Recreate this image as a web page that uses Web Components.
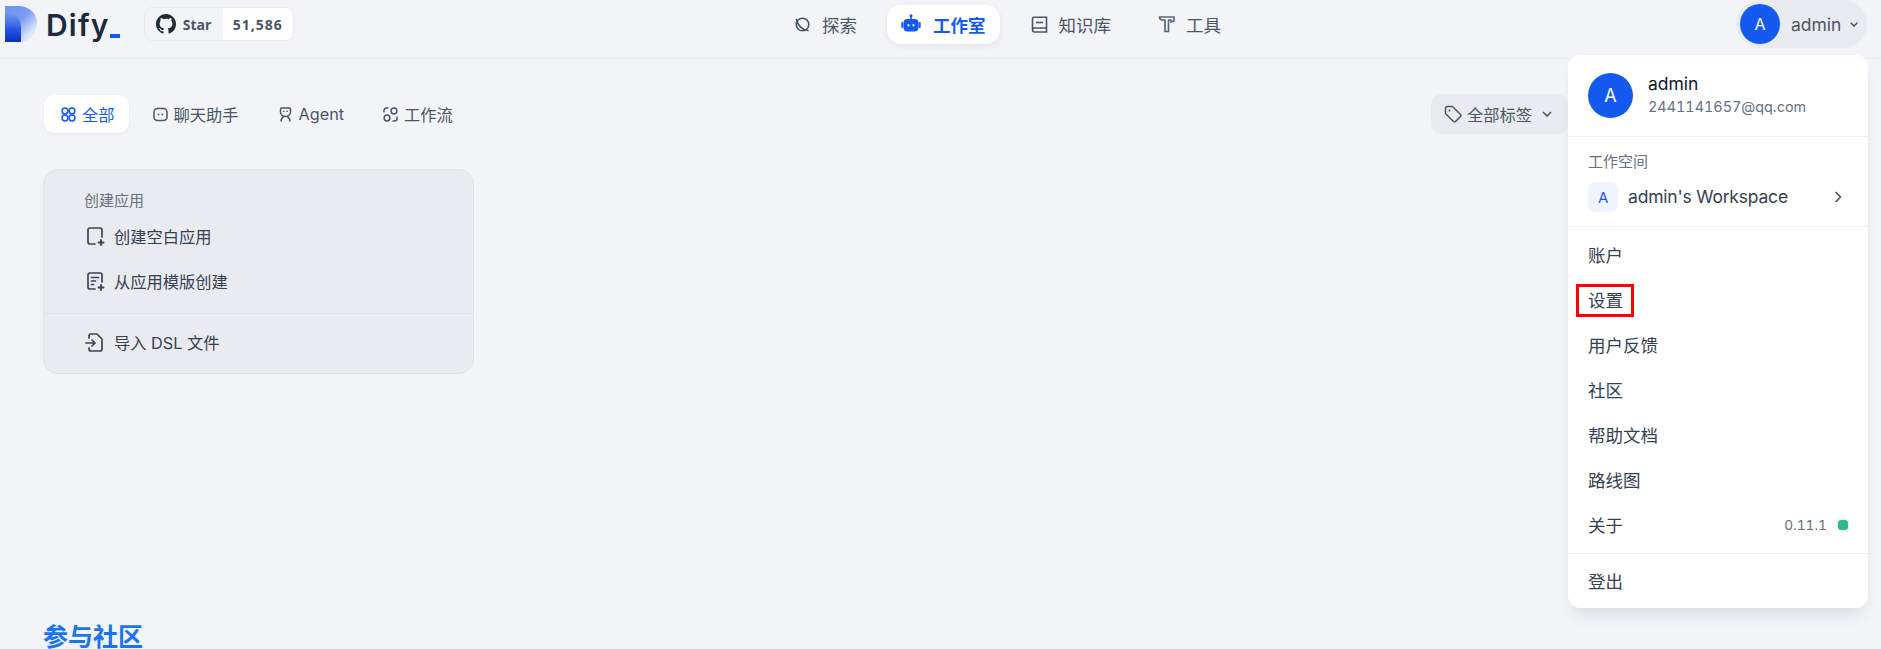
<!DOCTYPE html>
<html lang="zh"><head><meta charset="utf-8"><title>Dify</title>
<style>
html,body{margin:0;height:649px;overflow:hidden;background:#f3f4f8;font-family:Inter,"Noto Sans CJK SC",sans-serif;color:#354052}
</style></head><body>
<dify-app>
<dify-header>
  <dify-logo slot="left"></dify-logo>
  <github-badge slot="left"></github-badge>
  <nav-item slot="nav"><svg slot="icon" width="17" height="17" viewBox="0 0 17 17" fill="none" stroke="#4a5568" stroke-width="1.600" stroke-linecap="round"><circle cx="8.500" cy="8.500" r="6.300"/><path d="M2.500 3.500C3.500 9 8 14 14 14.500"/></svg>探索</nav-item>
  <nav-item slot="nav" active><svg slot="icon" width="20" height="20" viewBox="0 0 20 20" fill="#155aef"><rect x="9.200" y="1" width="1.600" height="4"/><circle cx="10" cy="1.800" r="1.500"/><rect x="2.500" y="5" width="15" height="12.500" rx="4"/><rect x="0.300" y="8" width="2" height="6" rx="1"/><rect x="17.700" y="8" width="2" height="6" rx="1"/><rect x="6.500" y="10" width="2" height="2.600" rx="1" fill="#fff"/><rect x="11.500" y="10" width="2" height="2.600" rx="1" fill="#fff"/></svg>工作室</nav-item>
  <nav-item slot="nav"><svg slot="icon" width="17" height="17" viewBox="0 0 17 17" fill="none" stroke="#4a5568" stroke-width="1.600"><path d="M1.500 13.500V2.500C1.500 1.700 2 1.200 2.800 1.200H15.500V16H3.500A2 2 0 0 1 1.500 14 2 2 0 0 1 3.500 12H15.500"/><path d="M5 6.500h7"/></svg>知识库</nav-item>
  <nav-item slot="nav"><svg slot="icon" width="17" height="18" viewBox="0 0 17 18" fill="none" stroke="#5b6679" stroke-width="1.700" stroke-linejoin="round"><path d="M1.500 2H16V6L13 7V5H10.500V16.500H7V5H4.500C3 5 1.500 4 1.500 2Z"/></svg>工具</nav-item>
  <user-chip slot="right"></user-chip>
</dify-header>
<filter-bar>
  <filter-tab active><svg slot="icon" width="15" height="15" viewBox="0 0 15 15" fill="none" stroke="#155aef" stroke-width="1.500"><circle cx="4" cy="4" r="2.900"/><circle cx="11" cy="4" r="2.900"/><circle cx="4" cy="11" r="2.900"/><circle cx="11" cy="11" r="2.900"/></svg>全部</filter-tab>
  <filter-tab><svg slot="icon" width="15" height="15" viewBox="0 0 15 15" fill="none" stroke="#4b5567" stroke-width="1.500"><rect x="1" y="1.500" width="13" height="12" rx="3.500"/><circle cx="5.500" cy="7.500" r=".9" fill="#4b5567" stroke="none"/><circle cx="9.500" cy="7.500" r=".9" fill="#4b5567" stroke="none"/></svg>聊天助手</filter-tab>
  <filter-tab><svg slot="icon" width="15" height="15" viewBox="0 0 15 15" fill="none" stroke="#4b5567" stroke-width="1.500"><path d="M2.500 2.200C2.500 1.500 3 1 3.700 1h7.600c.7 0 1.200.5 1.200 1.200V5A5 4.500 0 0 1 2.500 5Z"/><path d="M3 14.500c0-2.500 1-4 2.800-5.200M12 14.500c0-2.500-1-4-2.800-5.200"/><path d="M5.800 3.800v1.200M9.200 3.800v1.200"/></svg>Agent</filter-tab>
  <filter-tab><svg slot="icon" width="15" height="15" viewBox="0 0 15 15" fill="none" stroke="#4b5567" stroke-width="1.500"><circle cx="11" cy="4" r="2.900"/><circle cx="4" cy="11" r="2.900"/><path d="M1 5.500V3.500a2.500 2.500 0 0 1 2.500-2.500H5.500M14 9.500v2a2.500 2.500 0 0 1-2.500 2.500H9.500"/></svg>工作流</filter-tab>
  <tag-filter slot="right"></tag-filter>
</filter-bar>
<create-card>
  <card-action><svg slot="icon" width="20" height="20" viewBox="0 0 20 20" fill="none" stroke="#3b4658" stroke-width="1.700" stroke-linecap="round"><path d="M10 18H5a2 2 0 0 1-2-2V4a2 2 0 0 1 2-2h10a2 2 0 0 1 2 2v7"/><path d="M16 14v5M13.500 16.500h5" stroke-width="1.900"/></svg>创建空白应用</card-action>
  <card-action><svg slot="icon" width="20" height="20" viewBox="0 0 20 20" fill="none" stroke="#3b4658" stroke-width="1.700" stroke-linecap="round"><path d="M10 18H5a2 2 0 0 1-2-2V4a2 2 0 0 1 2-2h10a2 2 0 0 1 2 2v7"/><path d="M6.500 6.500h7M6.500 10h4M6.500 13.500h2"/><path d="M16 14v5M13.500 16.500h5" stroke-width="1.900"/></svg>从应用模版创建</card-action>
  <card-action slot="footer"><svg slot="icon" width="20" height="20" viewBox="0 0 20 20" fill="none" stroke="#3b4658" stroke-width="1.700" stroke-linecap="round" stroke-linejoin="round"><path d="M4 6V4a2 2 0 0 1 2-2h6l5 5v10a2 2 0 0 1-2 2H6a2 2 0 0 1-2-2v-1"/><path d="M1 11h9M7 8l3 3-3 3"/></svg>导入 DSL 文件</card-action>
</create-card>
<section-title>参与社区</section-title>
<account-menu>
  <menu-item>账户</menu-item>
  <menu-item><marked-label>设置</marked-label></menu-item>
  <menu-item>用户反馈</menu-item>
  <menu-item>社区</menu-item>
  <menu-item>帮助文档</menu-item>
  <menu-item>路线图</menu-item>
  <menu-item>关于<version-tag slot="end">0.11.1</version-tag></menu-item>
  <menu-item slot="footer">登出</menu-item>
</account-menu>
</dify-app>
<script>
const def=(name,html)=>customElements.define(name,class extends HTMLElement{
  constructor(){super();this.attachShadow({mode:'open'}).innerHTML=html;}
});
def('dify-app',`<style>:host{display:block;position:relative;height:649px;overflow:hidden}</style><slot></slot>`);
def('dify-header',`<style>
:host{display:grid;grid-template-columns:766px auto 1fr;align-items:center;height:58px;border-bottom:1px solid #e9ebf0;padding:0 14px 0 5px}
.l{display:flex;align-items:center;gap:24px;height:48px;margin-top:-10px}
.n{display:flex;align-items:center;gap:2px;margin-top:-10px}
.r{display:flex;justify-content:flex-end;margin-top:-10px}
</style><div class="l"><slot name="left"></slot></div><div class="n"><slot name="nav"></slot></div><div class="r"><slot name="right"></slot></div>`);
def('dify-logo',`<style>:host{display:flex;align-items:center;gap:9px;color:#1c2a3e}
b{font:600 30px/36px Inter,sans-serif;letter-spacing:1.2px}
i{display:inline-block;width:10px;height:4px;background:#155aef;align-self:flex-end;margin-bottom:5px}
.w{display:flex;align-items:flex-end;height:36px;margin-top:2px}</style>
<svg width="32" height="36" viewBox="0 0 32 36"><defs><linearGradient id="a" x1="0" y1="0" x2="0" y2="1"><stop offset="0" stop-color="#3f6bea" stop-opacity="0"/><stop offset=".55" stop-color="#2a58e4"/><stop offset="1" stop-color="#0530bf"/></linearGradient><linearGradient id="b" x1="0" y1="0" x2=".9" y2="1"><stop offset="0" stop-color="#6f93ee"/><stop offset=".45" stop-color="#7a9bf0"/><stop offset=".8" stop-color="#d6e2fb"/><stop offset="1" stop-color="#f3f6fd"/></linearGradient></defs>
<path d="M0 0H13C24 0 32 7 32 17C32 27 25 36 15 36H0Z" fill="url(#b)"/><path d="M0 6C8 6 16 10 16 22V36H0Z" fill="url(#a)"/></svg>
<div class="w"><b>Dify</b><i></i></div>`);
def('github-badge',`<style>:host{display:flex;height:34px;box-sizing:border-box;border:1px solid #e9ebf0;border-radius:8px;overflow:hidden;font:700 14px "Open Sans",sans-serif;color:#4b5567;width:150px}
.a{width:78px;display:flex;align-items:center;justify-content:center;gap:7px;background:#f2f4f7;color:#4b5567}.c{flex:1;background:#fff;display:flex;align-items:center;justify-content:center;letter-spacing:1px}</style>
<div class="a"><svg width="20" height="20" viewBox="0 0 16 16" fill="#1f2937"><path d="M8 0C3.580 0 0 3.580 0 8c0 3.540 2.290 6.530 5.470 7.590.4.070.55-.17.55-.38 0-.19-.01-.82-.01-1.490-2.010.37-2.530-.49-2.690-.94-.09-.23-.48-.94-.82-1.130-.28-.15-.68-.52-.01-.53.630-.01 1.080.58 1.230.82.720 1.210 1.870.87 2.330.66.070-.52.280-.87.510-1.070-1.780-.2-3.640-.89-3.640-3.950 0-.87.310-1.590.820-2.150-.08-.2-.36-1.020.08-2.120 0 0 .67-.21 2.200.820.640-.18 1.320-.27 2-.27s1.360.09 2 .27c1.530-1.040 2.200-.82 2.200-.82.440 1.100.16 1.920.08 2.120.51.560.82 1.270.82 2.150 0 3.070-1.870 3.750-3.650 3.950.290.250.540.730.540 1.480 0 1.070-.01 1.930-.01 2.200 0 .21.150.46.550.38A8.010 8.010 0 0 0 16 8c0-4.420-3.580-8-8-8Z"/></svg>Star</div><div class="c">51,586</div>`);
def('nav-item',`<style>:host{display:flex;align-items:center;gap:11px;height:39px;padding:0 13px 0 14px;margin:0 9px;border-radius:14px;font-size:17.500px;color:#4b5567}
:host([active]){background:#fff;color:#155aef;font-weight:600;box-shadow:0 2px 6px rgba(16,24,40,.07);margin:0 6px;gap:12px;padding-right:14px}
slot[name=icon]{display:flex}</style><slot name="icon"></slot><slot></slot>`);
def('user-chip',`<style>:host{display:flex;align-items:center;height:48px;width:131px;box-sizing:border-box;padding-left:4px;border-radius:24px;background:#e9ebf0;font-size:17.500px;color:#4b5567}
.a{width:40px;height:40px;border-radius:50%;background:#155aef;color:#fff;display:flex;align-items:center;justify-content:center;font-size:16px;margin-right:11px}
svg{margin-left:9px}</style><span class="a">A</span>admin<svg width="8" height="5" viewBox="0 0 8 5" fill="none" stroke="#4b5567" stroke-width="1.500"><path d="M.7.700 4 4 7.300.7"/></svg>`);
def('filter-bar',`<style>:host{display:flex;align-items:center;gap:3px;margin:36px 313px 0 44px;height:38px;font-size:16.250px}
.s{flex:1}</style><slot></slot><div class="s"></div><slot name="right"></slot>`);
def('filter-tab',`<style>:host{display:flex;align-items:center;gap:6px;height:38px;padding:0 22px 0 17px;border-radius:10px;color:#4b5567;margin-right:-3px}
:host([active]){background:#fff;color:#155aef;box-shadow:0 1px 3px rgba(16,24,40,.06);padding:0 14px 0 17px;margin-right:4px}
slot[name=icon]{display:flex}</style><slot name="icon"></slot><slot></slot>`);
def('tag-filter',`<style>:host{display:flex;align-items:center;width:137px;height:40px;box-sizing:border-box;padding-left:13px;border-radius:10px;background:#e9ebf0;color:#4b5567;font-size:16.250px;gap:5px}</style>
<svg width="18" height="18" viewBox="0 0 18 18" fill="none" stroke="#4b5567" stroke-width="1.500" stroke-linejoin="round"><path d="M1.500 3v5.500L9.500 16.500a1.500 1.500 0 0 0 2 0l5-5a1.500 1.500 0 0 0 0-2L8.500 1.500H3A1.500 1.500 0 0 0 1.500 3Z"/><circle cx="5.500" cy="5.500" r="1" fill="#4b5567" stroke="none"/></svg>全部标签<svg style="margin-left:5px" width="10" height="6" viewBox="0 0 10 6" fill="none" stroke="#4b5567" stroke-width="1.600"><path d="M1 1l4 4 4-4"/></svg>`);
def('create-card',`<style>:host{display:block;width:431px;height:205px;box-sizing:border-box;margin:36px 0 0 43px;border:1px solid #e0e2e8;border-radius:15px;background:#eaebf0;font-size:16.250px;color:#354052}
h4{margin:0;padding:21px 0 3.500px 40px;font:400 15px/20px Inter,"Noto Sans CJK SC",sans-serif;color:#676f83}
.f{border-top:1px solid #dfe1e7;margin-top:8.500px;padding-top:6px}</style>
<h4>创建应用</h4><slot></slot><div class="f"><slot name="footer"></slot></div>`);
def('card-action',`<style>:host{display:flex;align-items:center;gap:9px;height:45px;box-sizing:border-box;padding:0 0 1.500px 41px}slot[name=icon]{display:flex}</style><slot name="icon"></slot><slot></slot>`);
def('section-title',`<style>:host{display:block;margin:246px 0 0 43px;font:700 25px/30px "Noto Sans CJK SC",sans-serif;color:#1a73f0}</style><slot></slot>`);
def('account-menu',`<style>:host{position:absolute;left:1568px;top:55px;width:300px;height:553px;box-sizing:border-box;background:#fff;border-radius:12px;box-shadow:0 12px 16px -4px rgba(16,24,40,.08),0 4px 6px -2px rgba(16,24,40,.03);display:flex;flex-direction:column;font-size:17.500px;color:#354052}
.h{display:flex;align-items:center;gap:15px;height:81px;padding:0 20px;border-bottom:1px solid #f0f1f4;flex:none}
.av{width:45px;height:45px;border-radius:50%;background:#155aef;color:#fff;display:flex;align-items:center;justify-content:center;font-size:18px}
.nm{color:#101828;line-height:23px;margin-top:-1px}.em{font-size:14.400px;color:#676f83;line-height:22px;margin-top:1px;font-feature-settings:"tnum"}
.w{height:90px;border-bottom:1px solid #f0f1f4;padding:13px 20px 0;box-sizing:border-box;flex:none}
.wl{font-size:15px;color:#676f83;line-height:24px}
.wr{display:flex;align-items:center;gap:10px;margin-top:8px;height:30px;color:#354052;letter-spacing:-.2px}
.wt{padding-bottom:2px}
.wa{width:30px;height:30px;border-radius:7px;background:#eff4ff;color:#155aef;font-size:15px;display:flex;align-items:center;justify-content:center}
.sp{flex:1}.wr svg{margin-right:6px}
.m{padding:5px 0 6px;border-bottom:1px solid #f0f1f4;flex:none}.ft{padding-top:4px}</style>
<div class="h"><div class="av">A</div><div><div class="nm">admin</div><div class="em">2441141657@qq.com</div></div></div>
<div class="w"><div class="wl">工作空间</div><div class="wr"><span class="wa">A</span><span class="wt">admin's Workspace</span><span class="sp"></span><svg width="8" height="12" viewBox="0 0 8 12" fill="none" stroke="#4b5567" stroke-width="1.600"><path d="M1.500 1l5 5-5 5"/></svg></div></div>
<div class="m"><slot></slot></div><div class="ft"><slot name="footer"></slot></div>`);
def('menu-item',`<style>:host{display:flex;align-items:center;height:45px;padding:0 20px;justify-content:space-between;color:#354052}</style><span><slot></slot></span><slot name="end"></slot>`);
def('marked-label',`<style>:host{display:inline-block;position:relative}
i{position:absolute;left:-12px;top:50%;margin-top:-16px;width:58px;height:33px;box-sizing:border-box;border:3px solid #f00}</style><slot></slot><i></i>`);
def('version-tag',`<style>:host{display:flex;align-items:center;gap:11px;font-size:13.700px;color:#676f83;font-feature-settings:"tnum"}
i{width:10px;height:10px;border-radius:3.500px;background:#31b886;box-shadow:0 0 3px rgba(49,184,134,.5)}</style><slot></slot><i></i>`);
</script>
</body></html>
